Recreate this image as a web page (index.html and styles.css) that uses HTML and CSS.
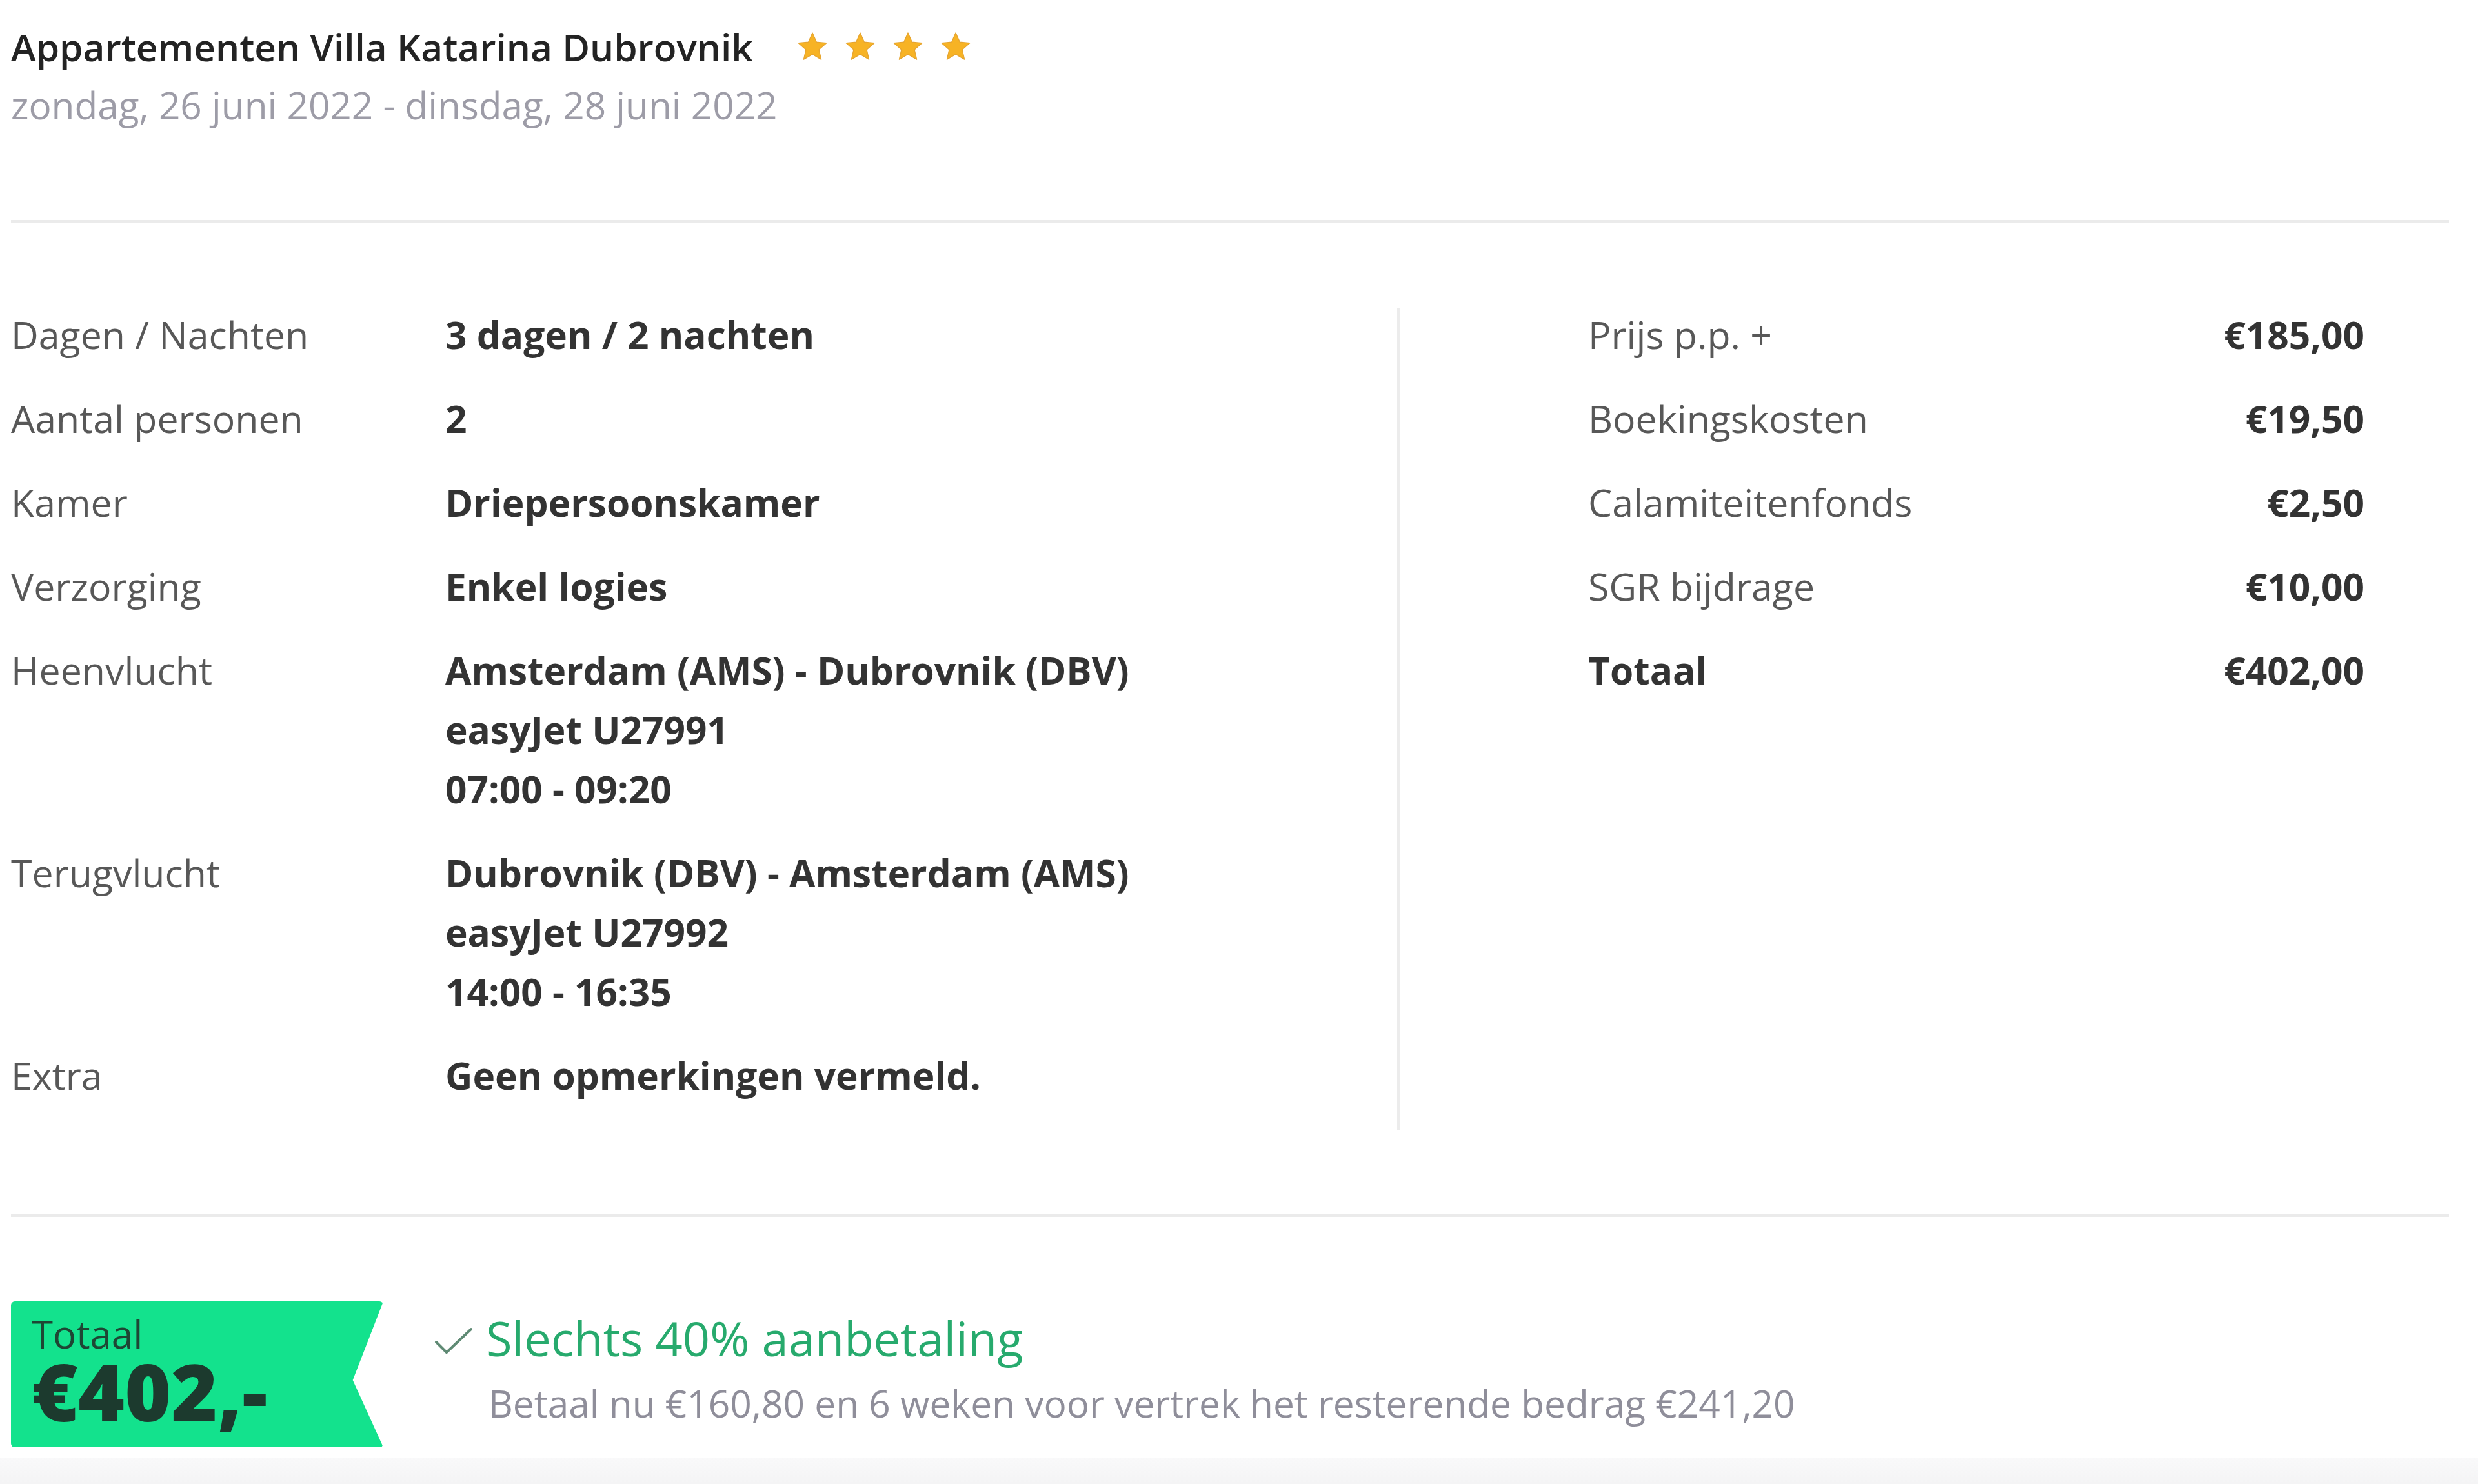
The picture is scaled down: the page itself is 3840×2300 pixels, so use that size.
FILE: index.html
```html
<!DOCTYPE html>
<html lang="nl">
<head>
<meta charset="utf-8">
<title>Appartementen Villa Katarina Dubrovnik</title>
<link rel="stylesheet" href="styles.css">
</head>
<body>
<div class="page">
  <header class="header">
    <div class="title-row">
      <h1 class="title">Appartementen Villa Katarina Dubrovnik</h1>
      <div class="stars">
        <svg class="star" viewBox="0 0 24 24"><path d="M12 2.6l2.7 6.1 6.6.6-5 4.4 1.5 6.5L12 16.8l-5.8 3.4 1.5-6.5-5-4.4 6.6-.6z"/></svg>
        <svg class="star" viewBox="0 0 24 24"><path d="M12 2.6l2.7 6.1 6.6.6-5 4.4 1.5 6.5L12 16.8l-5.8 3.4 1.5-6.5-5-4.4 6.6-.6z"/></svg>
        <svg class="star" viewBox="0 0 24 24"><path d="M12 2.6l2.7 6.1 6.6.6-5 4.4 1.5 6.5L12 16.8l-5.8 3.4 1.5-6.5-5-4.4 6.6-.6z"/></svg>
        <svg class="star" viewBox="0 0 24 24"><path d="M12 2.6l2.7 6.1 6.6.6-5 4.4 1.5 6.5L12 16.8l-5.8 3.4 1.5-6.5-5-4.4 6.6-.6z"/></svg>
      </div>
    </div>
    <div class="date">zondag, 26 juni 2022 - dinsdag, 28 juni 2022</div>
  </header>

  <div class="rule"></div>

  <section class="details">
    <div class="info">
      <div class="label">Dagen / Nachten</div>
      <div class="value">3 dagen / 2 nachten</div>
      <div class="label">Aantal personen</div>
      <div class="value">2</div>
      <div class="label">Kamer</div>
      <div class="value">Driepersoonskamer</div>
      <div class="label">Verzorging</div>
      <div class="value">Enkel logies</div>
      <div class="label">Heenvlucht</div>
      <div class="value">Amsterdam (AMS) - Dubrovnik (DBV)<br>easyJet U27991<br>07:00 - 09:20</div>
      <div class="label">Terugvlucht</div>
      <div class="value">Dubrovnik (DBV) - Amsterdam (AMS)<br>easyJet U27992<br>14:00 - 16:35</div>
      <div class="label">Extra</div>
      <div class="value">Geen opmerkingen vermeld.</div>
    </div>
    <div class="vline"></div>
    <div class="prices">
      <div class="label">Prijs p.p. +</div>
      <div class="value amount">€185,00</div>
      <div class="label">Boekingskosten</div>
      <div class="value amount">€19,50</div>
      <div class="label">Calamiteitenfonds</div>
      <div class="value amount">€2,50</div>
      <div class="label">SGR bijdrage</div>
      <div class="value amount">€10,00</div>
      <div class="value">Totaal</div>
      <div class="value amount">€402,00</div>
    </div>
  </section>

  <div class="rule rule-bottom"></div>

  <section class="deposit">
    <div class="badge">
      <div class="badge-label">Totaal</div>
      <div class="badge-price">€402,-</div>
    </div>
    <div class="pay">
      <div class="pay-head">
        <svg class="check" viewBox="0 0 60 44"><path d="M3 24 L19 40 L57 4"/></svg>
        <span class="pay-title">Slechts 40% aanbetaling</span>
      </div>
      <div class="pay-sub">Betaal nu €160,80 en 6 weken voor vertrek het resterende bedrag €241,20</div>
    </div>
  </section>
</div>
<div class="band"></div>
</body>
</html>
```

FILE: styles.css
```css
html, body {
  margin: 0;
  padding: 0;
  background: #ffffff;
}

body {
  font-family: "Open Sans", "Noto Sans", sans-serif;
  width: 3840px;
  height: 2300px;
  overflow: hidden;
}

.page {
  padding: 27px 45px 0 17px;
}

/* header */
.title-row {
  display: flex;
  align-items: center;
  gap: 64px;
  height: 90px;
}

.title {
  margin: 0;
  font-size: 58.5px;
  line-height: 90px;
  font-weight: 600;
  color: #232323;
}

.stars {
  display: flex;
  gap: 18px;
  padding-top: 2px;
}

.star {
  width: 56px;
  height: 56px;
  fill: #f7b325;
  stroke: #e6a531;
  stroke-width: 0.6;
  stroke-linejoin: round;
}

.date {
  font-size: 58.5px;
  line-height: 90px;
  color: #9d9ca7;
}

.rule {
  height: 5px;
  background: #ebebeb;
  margin-top: 134px;
}

/* details */
.details {
  display: flex;
  padding-top: 126px;
}

.info {
  width: 2148px;
  display: grid;
  grid-template-columns: 673px 1fr;
  row-gap: 38px;
  padding-bottom: 39px;
  align-content: start;
}

.label {
  font-size: 59px;
  line-height: 92px;
  color: #585858;
  white-space: nowrap;
}

.value {
  font-size: 58.6px;
  line-height: 92px;
  font-weight: 700;
  color: #333333;
  white-space: nowrap;
}

.vline {
  width: 4px;
  background: #ececec;
  margin-top: 5px;
}

.prices {
  flex: 1;
  display: grid;
  grid-template-columns: 1fr auto;
  row-gap: 38px;
  padding-left: 292px;
  padding-right: 131px;
  align-content: start;
}

.amount {
  text-align: right;
}

.rule-bottom {
  margin-top: 130px;
}

/* deposit */
.deposit {
  display: flex;
  align-items: flex-start;
  margin-top: 131px;
}

.badge {
  width: 577px;
  height: 226px;
  box-sizing: border-box;
  padding: 20px 0 0 32px;
  background: #13e28d;
  border-radius: 6px;
  clip-path: polygon(0 0, 100% 0, 91.8% 54%, 100% 100%, 0 100%);
}

.badge-label {
  font-size: 60px;
  line-height: 60px;
  color: #1e4634;
}

.badge-price {
  font-size: 123px;
  line-height: 110px;
  font-weight: 800;
  color: #1c3a2e;
  margin-top: 4px;
}

.pay {
  margin-left: 79px;
  padding-top: 9px;
}

.pay-head {
  display: flex;
  align-items: center;
  gap: 20px;
  height: 96px;
}

.check {
  width: 60px;
  height: 44px;
  fill: none;
  stroke: #5f8a74;
  stroke-width: 4;
  stroke-linecap: round;
  stroke-linejoin: round;
  margin-top: 8px;
}

.pay-title {
  font-size: 74px;
  line-height: 96px;
  font-weight: 500;
  color: #27aa6d;
}

.pay-sub {
  margin-left: 84px;
  margin-top: 12px;
  font-size: 58.6px;
  line-height: 80px;
  color: #8f8e9a;
  white-space: nowrap;
}

.band {
  height: 40px;
  margin-top: 17px;
  background: linear-gradient(#f9f9fa, #f4f4f5);
}
```
